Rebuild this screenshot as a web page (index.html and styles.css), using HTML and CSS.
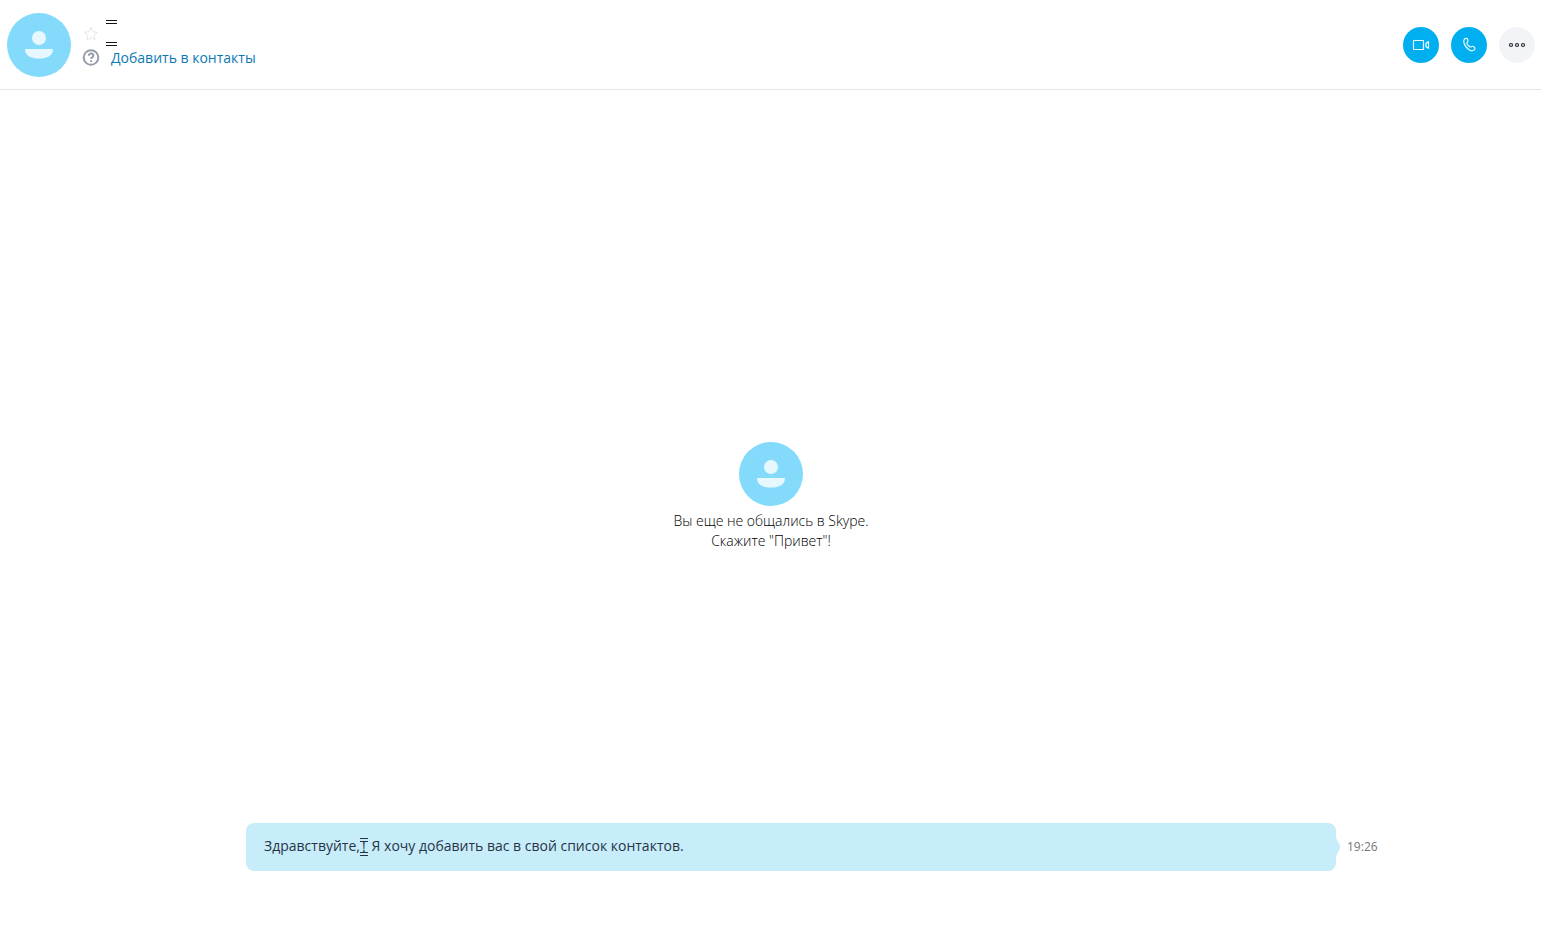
FILE: index.html
```html
<!DOCTYPE html>
<html lang="ru">
<head>
<meta charset="utf-8">
<title>Skype</title>
<link rel="stylesheet" href="styles.css">
</head>
<body>
<header class="header">
  <svg class="avatar" viewBox="0 0 64 64" aria-hidden="true"><circle class="avatar-bg" cx="32" cy="32" r="32"/><circle class="avatar-fg" cx="32" cy="25" r="7"/><path class="avatar-fg" d="M18 36h28c0 7-6 9.500-14 9.500s-14-2.500-14-9.500z"/></svg>
  <div class="contact">
    <div class="contact-row">
      <button class="star" aria-label="Избранное"><svg width="16" height="16" viewBox="0 0 16 16"><path d="M8 1.500l1.900 4.300 4.700.5-3.500 3.100 1 4.600L8 11.700 3.900 14l1-4.600-3.500-3.100 4.700-.5z"/></svg></button>
      <h1 class="name" aria-label="Контакт"></h1>
    </div>
    <div class="contact-row">
      <svg class="status" width="18" height="18" viewBox="0 0 18 18" aria-hidden="true"><circle cx="9" cy="8.500" r="7.300"/><path d="M6.800 6.800c0-3 4.500-2.800 4.500-.1 0 1.600-2.200 1.500-2.200 3.200M9.100 11.300v1.700"/></svg>
      <a class="add" href="#">Добавить в контакты</a>
    </div>
  </div>
  <div class="actions">
    <button class="action" aria-label="Видеозвонок"><svg width="20" height="20" viewBox="0 0 20 20"><rect x="2.500" y="5.500" width="10" height="9" rx=".5"/><path d="M17.500 6.800v6.400c-1.800-.4-2.700-1.600-2.700-3.200s.9-2.800 2.700-3.200z"/></svg></button>
    <button class="action" aria-label="Аудиозвонок"><svg width="20" height="20" viewBox="0 0 20 20"><path d="M5.800 3.800c1.200-.9 2.600-.4 3 .9.400 1.200.2 2.100-.7 2.800-.6.600 0 1.800 1.200 3s2.200 1.900 2.900 1.300c.8-.8 1.900-.6 2.900.1 1.100.9 1.200 2.100.2 3-1.400 1.300-3.300 1.200-5.200-.1-2.600-1.700-4.500-4.300-5.200-7.200-.4-1.700-.1-3 .9-3.800z"/></svg></button>
    <button class="action more" aria-label="Ещё"><svg width="20" height="20" viewBox="0 0 20 20"><circle cx="4" cy="10" r="1.500"/><circle cx="10" cy="10" r="1.500"/><circle cx="16" cy="10" r="1.500"/></svg></button>
  </div>
</header>
<main class="chat">
  <section class="empty">
    <svg class="avatar" viewBox="0 0 64 64" aria-hidden="true"><circle class="avatar-bg" cx="32" cy="32" r="32"/><circle class="avatar-fg" cx="32" cy="25" r="7"/><path class="avatar-fg" d="M18 36h28c0 7-6 9.500-14 9.500s-14-2.500-14-9.500z"/></svg>
    <p class="hint">Вы еще не общались в Skype.<br>Скажите "Привет"!</p>
  </section>
  <div class="message">
    <p class="bubble">Здравствуйте,<span class="mark">!</span> Я хочу добавить вас в свой список контактов.</p>
    <svg class="tail" width="4" height="24" viewBox="0 0 4 24" aria-hidden="true"><path d="M0 0c0 6 4 8 4 12s-4 6-4 12z"/></svg>
    <time class="time">19:26</time>
  </div>
</main>
</body>
</html>
```
FILE: styles.css
```css
* { box-sizing: border-box; }
body {
  margin: 0;
  min-height: 100vh;
  display: flex;
  flex-direction: column;
  background: #fff;
  color: #000;
  font: 14px/20px "Open Sans", "Noto Sans", sans-serif;
}
h1, p { margin: 0; }
button { padding: 0; border: 0; background: none; cursor: pointer; }
button svg { display: block; fill: none; stroke: currentColor; }
.header {
  display: flex;
  align-items: center;
  padding: 13px 6px 12px 7px;
  border-bottom: 1px solid #e1e6ea;
}
.avatar { width: 64px; height: 64px; display: block; flex: none; }
.avatar-bg { fill: #84dafa; }
.avatar-fg { fill: #e6f7fe; }
.contact { margin-left: 11px; padding-bottom: 3px; }
.contact-row { display: flex; align-items: center; }
.star { width: 18px; color: #e4e6e8; }
.star svg { margin-left: 1px; }
.name {
  width: 11px;
  height: 26px;
  margin: 1px 0 2px 6px;
  border-top: 4px double #10151c;
  border-bottom: 4px double #10151c;
}
.status { fill: none; stroke: #959dab; stroke-width: 2; }
.add { margin-left: 11px; color: #0c78b4; text-decoration: none; }
.actions { display: flex; gap: 12px; margin-left: auto; }
.action {
  width: 36px;
  height: 36px;
  display: grid;
  place-items: center;
  border-radius: 50%;
  background: #00aff0;
  color: #e8f9ff;
}
.action svg { stroke-width: 1.2; }
.more { background: #f2f4f7; color: #2b2c33; }
.chat { flex: 1; display: flex; flex-direction: column; }
.empty {
  flex: 1;
  display: flex;
  flex-direction: column;
  align-items: center;
  justify-content: center;
  gap: 5px;
  padding: 80px 0 0 1px;
}
.hint { text-align: center; font-weight: 300; }
.message {
  display: flex;
  align-items: center;
  margin: 0 165px 55px 246px;
}
.bubble {
  flex: 1;
  padding: 13px 18px 15px;
  border-radius: 8px;
  background: #c7edfb;
  color: #273444;
}
.mark {
  display: inline-block;
  width: 8px;
  height: 18px;
  border-top: 4px double;
  border-bottom: 4px double;
  line-height: 10px;
  text-align: center;
  vertical-align: middle;
}
.tail { fill: #c7edfb; }
.time { width: 36px; padding-left: 7px; color: #717579; font-size: 12px; white-space: nowrap; }
```
